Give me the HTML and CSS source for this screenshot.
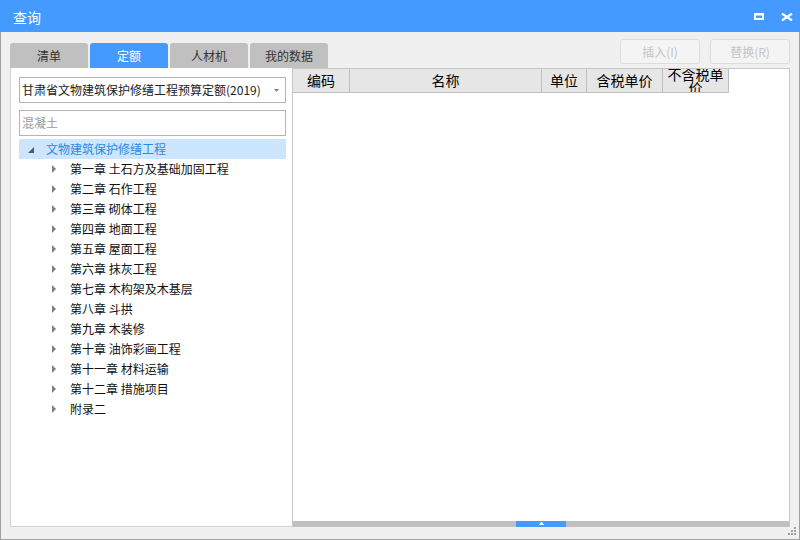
FILE: index.html
```html
<!DOCTYPE html>
<html lang="zh">
<head>
<meta charset="utf-8">
<title>查询</title>
<link rel="stylesheet" href="styles.css">
</head>
<body>
<div class="window">
  <div class="titlebar">
    <span class="title">查询</span>
    <div class="tb-icons">
      <svg class="ico-max" width="10" height="7" viewBox="0 0 10 7"><path fill="#fff" fill-rule="evenodd" d="M0 0H10V7H0Z M2 2.5V5H8V2.5Z"/></svg>
      <svg class="ico-close" width="12" height="8" viewBox="0 0 12 8"><path stroke="#fff" stroke-width="2.2" d="M1 0.5L11 7.5M11 0.5L1 7.5"/></svg>
    </div>
  </div>
  <div class="body">
    <div class="toolbar">
      <div class="tabs">
        <div class="tab">清单</div>
        <div class="tab active">定额</div>
        <div class="tab">人材机</div>
        <div class="tab">我的数据</div>
      </div>
      <div class="actions">
        <button class="btn" disabled>插入(I)</button>
        <button class="btn" disabled>替换(R)</button>
      </div>
    </div>
    <div class="panels">
      <div class="left">
        <div class="combo">
          <span class="combo-text">甘肃省文物建筑保护修缮工程预算定额(2019)</span>
          <svg class="caret" width="5" height="3" viewBox="0 0 5 3"><path fill="#808080" d="M0 0H5L2.5 3Z"/></svg>
        </div>
        <div class="search">混凝土</div>
        <ul class="tree">
          <li class="node root"><svg class="exp" width="6" height="6" viewBox="0 0 6 6"><path fill="#595959" d="M6 0V6H0Z"/></svg><span class="label">文物建筑保护修缮工程</span></li>
          <li class="node child"><svg class="exp" width="4" height="8" viewBox="0 0 4 8"><path fill="#808080" d="M0 0L4 4L0 8Z"/></svg><span class="label">第一章 土石方及基础加固工程</span></li>
          <li class="node child"><svg class="exp" width="4" height="8" viewBox="0 0 4 8"><path fill="#808080" d="M0 0L4 4L0 8Z"/></svg><span class="label">第二章 石作工程</span></li>
          <li class="node child"><svg class="exp" width="4" height="8" viewBox="0 0 4 8"><path fill="#808080" d="M0 0L4 4L0 8Z"/></svg><span class="label">第三章 砌体工程</span></li>
          <li class="node child"><svg class="exp" width="4" height="8" viewBox="0 0 4 8"><path fill="#808080" d="M0 0L4 4L0 8Z"/></svg><span class="label">第四章 地面工程</span></li>
          <li class="node child"><svg class="exp" width="4" height="8" viewBox="0 0 4 8"><path fill="#808080" d="M0 0L4 4L0 8Z"/></svg><span class="label">第五章 屋面工程</span></li>
          <li class="node child"><svg class="exp" width="4" height="8" viewBox="0 0 4 8"><path fill="#808080" d="M0 0L4 4L0 8Z"/></svg><span class="label">第六章 抹灰工程</span></li>
          <li class="node child"><svg class="exp" width="4" height="8" viewBox="0 0 4 8"><path fill="#808080" d="M0 0L4 4L0 8Z"/></svg><span class="label">第七章 木构架及木基层</span></li>
          <li class="node child"><svg class="exp" width="4" height="8" viewBox="0 0 4 8"><path fill="#808080" d="M0 0L4 4L0 8Z"/></svg><span class="label">第八章 斗拱</span></li>
          <li class="node child"><svg class="exp" width="4" height="8" viewBox="0 0 4 8"><path fill="#808080" d="M0 0L4 4L0 8Z"/></svg><span class="label">第九章 木装修</span></li>
          <li class="node child"><svg class="exp" width="4" height="8" viewBox="0 0 4 8"><path fill="#808080" d="M0 0L4 4L0 8Z"/></svg><span class="label">第十章 油饰彩画工程</span></li>
          <li class="node child"><svg class="exp" width="4" height="8" viewBox="0 0 4 8"><path fill="#808080" d="M0 0L4 4L0 8Z"/></svg><span class="label">第十一章 材料运输</span></li>
          <li class="node child"><svg class="exp" width="4" height="8" viewBox="0 0 4 8"><path fill="#808080" d="M0 0L4 4L0 8Z"/></svg><span class="label">第十二章 措施项目</span></li>
          <li class="node child"><svg class="exp" width="4" height="8" viewBox="0 0 4 8"><path fill="#808080" d="M0 0L4 4L0 8Z"/></svg><span class="label">附录二</span></li>
        </ul>
      </div>
      <div class="right">
        <div class="grid-head">
          <div class="col c-code">编码</div>
          <div class="col c-name">名称</div>
          <div class="col c-unit">单位</div>
          <div class="col c-tax">含税单价</div>
          <div class="col c-notax"><span>不含税单价</span></div>
        </div>
        <div class="grid-body"></div>
        <div class="hscroll">
          <div class="thumb"><svg width="5" height="3" viewBox="0 0 5 3"><path fill="#fff" d="M0 3L2 0H3L5 3Z"/></svg></div>
        </div>
      </div>
    </div>
    <svg class="grip" width="8" height="8" viewBox="0 0 8 8"><path fill="#a0a0a0" d="M6 0h2v2h-2z M3 3h2v2h-2z M6 3h2v2h-2z M0 6h2v2h-2z M3 6h2v2h-2z M6 6h2v2h-2z"/></svg>
  </div>
</div>
</body>
</html>
```
FILE: styles.css
```css
* { box-sizing: border-box; }
html, body { margin: 0; padding: 0; }
body {
  width: 800px;
  height: 540px;
  font-family: "Noto Sans CJK SC", "Noto Sans", "Liberation Sans", sans-serif;
  font-size: 12px;
  color: #000;
  background: #f0f0f0;
  overflow: hidden;
}
.window {
  width: 800px;
  height: 540px;
  display: flex;
  flex-direction: column;
}
.titlebar {
  height: 32px;
  flex: none;
  background: #459aff;
  display: flex;
  align-items: center;
  justify-content: space-between;
  padding: 0 7px 0 13px;
}
.title {
  color: #fff;
  font-size: 14px;
  line-height: 16px;
  margin-top: 2px;
}
.tb-icons {
  display: flex;
  align-items: center;
  gap: 17px;
  margin-top: 1px;
}
.ico-max { display: block; }
.ico-close { display: block; margin-top: 1px; }

.body {
  flex: 1;
  position: relative;
  border: 1px solid #a0a0a0;
  border-top: 0;
  background: #f0f0f0;
  padding: 7px 9px 12px 9px;
  display: flex;
  flex-direction: column;
}
.toolbar {
  height: 29px;
  flex: none;
  display: flex;
  justify-content: space-between;
}
.tabs {
  display: flex;
  gap: 2px;
  align-self: flex-end;
}
.tab {
  width: 78px;
  height: 25px;
  background: #c0c0c0;
  color: #333;
  border-radius: 3px 3px 0 0;
  text-align: center;
  line-height: 25px;
  font-size: 12px;
}
.tab.active {
  background: #459aff;
  color: #fff;
}
.actions {
  display: flex;
  gap: 10px;
  align-self: flex-start;
}
.btn {
  width: 80px;
  height: 25px;
  border: 1px solid #dcdcdc;
  border-radius: 3px;
  background: #f4f4f4;
  color: #c4c4c4;
  font-family: inherit;
  font-size: 12px;
  line-height: 22px;
  padding: 0;
}

.panels {
  flex: 1;
  display: flex;
  min-height: 0;
}
.left {
  width: 283px;
  flex: none;
  background: #fff;
  border: 1px solid #d2d2d2;
  border-top: 0;
  border-right-color: #c8c8c8;
  padding: 9px 6px 0 8px;
  display: flex;
  flex-direction: column;
}
.combo {
  height: 26px;
  border: 1px solid #b4b4b4;
  display: flex;
  align-items: center;
  justify-content: space-between;
  padding: 0 6px 0 2px;
}
.combo-text {
  color: #222;
  line-height: 16px;
  white-space: nowrap;
}
.caret { display: block; }
.search {
  margin-top: 7px;
  height: 26px;
  border: 1px solid #b4b4b4;
  padding-left: 2px;
  line-height: 24px;
  color: #9a9a9a;
}
.tree {
  list-style: none;
  margin: 3px 0 0 0;
  padding: 0;
}
.node {
  height: 20px;
  display: flex;
  align-items: center;
  white-space: nowrap;
}
.node .label { line-height: 20px; }
.node .exp { display: block; flex: none; }
.root {
  background: #cce6ff;
  padding-left: 9px;
}
.root .exp { margin-right: 12px; margin-top: 2px; }
.root .label { color: #2e86e8; }
.child { padding-left: 33px; }
.child .exp { margin-right: 14px; }
.child .label { color: #111; }

.right {
  flex: 1;
  background: #fff;
  border-top: 1px solid #c8c8c8;
  border-right: 1px solid #c8c8c8;
  display: flex;
  flex-direction: column;
  min-width: 0;
}
.grid-head {
  height: 24px;
  flex: none;
  display: flex;
}
.col {
  height: 24px;
  background: #e6e6e6;
  border-right: 1px solid #c0c0c0;
  border-bottom: 1px solid #c0c0c0;
  display: flex;
  align-items: center;
  justify-content: center;
  font-size: 14px;
  line-height: 13px;
  overflow: hidden;
  text-align: center;
}
.c-code { width: 57px; }
.c-name { width: 192px; }
.c-unit { width: 45px; }
.c-tax { width: 76px; }
.c-notax { width: 66px; }
.c-notax span { display: block; width: 60px; }
.grid-body { flex: 1; }
.hscroll {
  height: 6px;
  flex: none;
  background: #c0c0c0;
  display: flex;
  justify-content: center;
}
.thumb {
  width: 50px;
  height: 6px;
  background: #459aff;
  display: flex;
  justify-content: center;
  padding-top: 1px;
}
.thumb svg { display: block; }
.grip {
  position: absolute;
  right: 3px;
  bottom: 4px;
  display: block;
}
```
